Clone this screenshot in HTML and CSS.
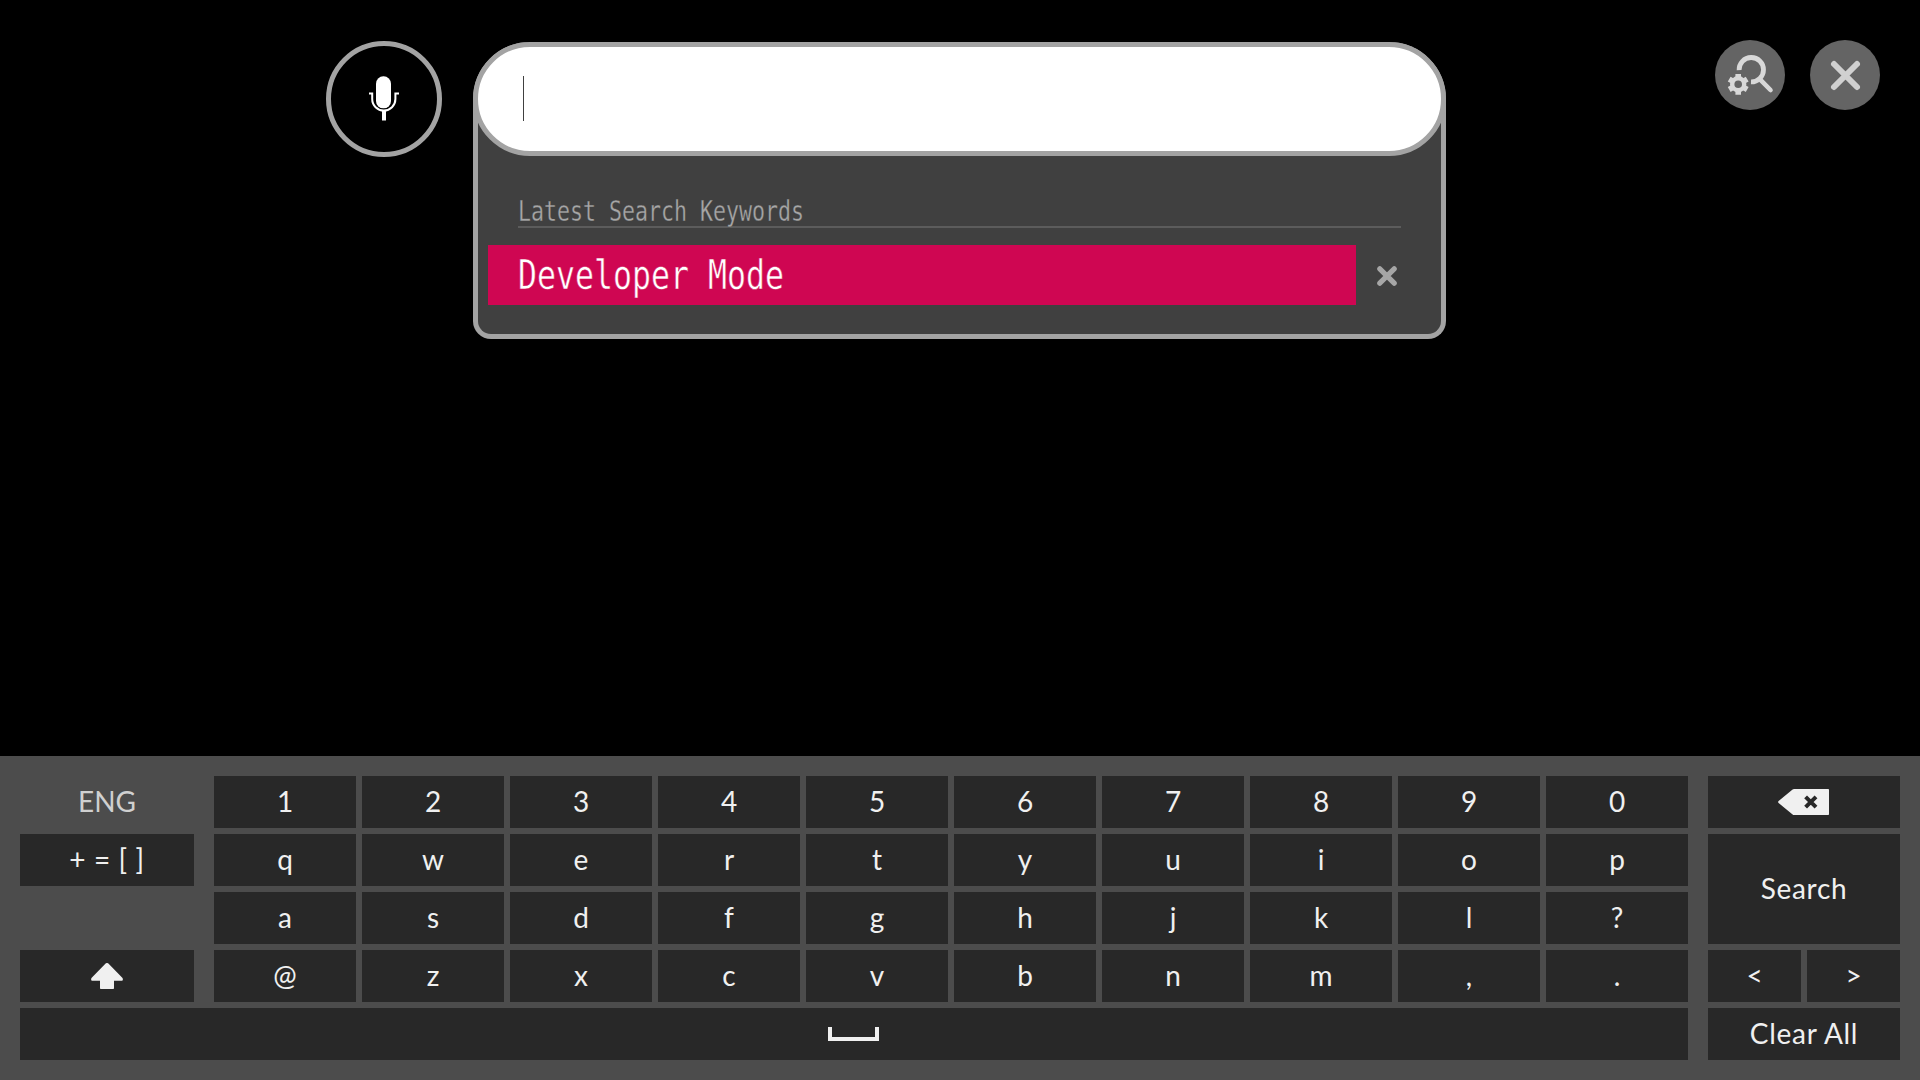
FILE: index.html
```html
<!DOCTYPE html>
<html lang="en">
<head>
<meta charset="utf-8">
<title>Search</title>
<link rel="stylesheet" href="styles.css">
</head>
<body>
<div class="screen">
  <header class="top">
    <button class="mic" aria-label="Voice search">
      <svg width="30" height="45" viewBox="0 0 30 45">
        <rect x="7" y="0.3" width="15" height="32" rx="7.4" fill="#fff"/>
        <path d="M0 17.6H3.2V23A11.5 11.5 0 0 0 26.4 23V17.6H30" fill="none" stroke="#fff" stroke-width="2"/>
        <path d="M13 35H17V44.5H13Z" fill="#fff"/>
      </svg>
    </button>
    <section class="panel">
      <div class="field"><span class="caret"></span></div>
      <div class="heading"><span class="label">Latest Search Keywords</span></div>
      <div class="result">
        <div class="keyword"><span class="term">Developer Mode</span></div>
        <svg class="remove" width="20" height="20" viewBox="0 0 20 20">
          <path d="M2.8 2.8L17.2 17.2M17.2 2.8L2.8 17.2" stroke="#a6a6a6" stroke-width="5.2" stroke-linecap="round"/>
        </svg>
      </div>
    </section>
    <nav class="actions">
      <svg width="70" height="70" viewBox="0 0 70 70">
        <circle cx="35" cy="35" r="35" fill="#646464"/>
        <g fill="none" stroke="#d8d8d8">
          <path d="M24.1 30.2A12.2 12.2 0 1 1 36 41.9" stroke-width="4.8"/>
          <path d="M45.5 39.8L55.5 50" stroke-width="4.6" stroke-linecap="round"/>
          <circle cx="23.2" cy="44.3" r="6" stroke-width="4.4"/>
          <path d="M23.2 33.9V38M23.2 50.6V54.7M14.2 39.1L17.8 41.2M28.6 47.4L32.2 49.5M14.2 49.5L17.8 47.4M28.6 41.2L32.2 39.1" stroke-width="5.6"/>
        </g>
      </svg>
      <svg width="70" height="70" viewBox="0 0 70 70">
        <circle cx="35" cy="35" r="35" fill="#646464"/>
        <path d="M24 24L47 47M47 24L24 47" stroke="#d0d0d0" stroke-width="6" stroke-linecap="round"/>
      </svg>
    </nav>
  </header>
  <main class="keyboard">
    <div class="lang">ENG</div>
    <div class="key c1">1</div><div class="key">2</div><div class="key">3</div><div class="key">4</div><div class="key">5</div><div class="key">6</div><div class="key">7</div><div class="key">8</div><div class="key">9</div><div class="key">0</div>
    <div class="key side icon">
      <svg width="52" height="26" viewBox="0 0 52 26">
        <path d="M16 0H50.2Q51 0 51 .8V25.2Q51 26 50.2 26H16Q15.3 26 14.6 25.4L.6 14Q-.4 13 .6 12L14.6 .6Q15.3 0 16 0Z" fill="#f0f0f0"/>
        <path d="M27.6 7.8L38 18.2M38 7.8L27.6 18.2" stroke="#282828" stroke-width="4"/>
      </svg>
    </div>
    <div class="key symbols">+ = [ ]</div>
    <div class="key c1">q</div><div class="key">w</div><div class="key">e</div><div class="key">r</div><div class="key">t</div><div class="key">y</div><div class="key">u</div><div class="key">i</div><div class="key">o</div><div class="key">p</div>
    <div class="key side tall word">Search</div>
    <div class="key c1">a</div><div class="key">s</div><div class="key">d</div><div class="key">f</div><div class="key">g</div><div class="key">h</div><div class="key">j</div><div class="key">k</div><div class="key">l</div><div class="key">?</div>
    <div class="key shift icon">
      <svg width="32" height="26" viewBox="0 0 32 26">
        <path d="M14.6 .6Q16 -.7 17.4 .6L31.3 14.8Q32.5 16.4 31.3 17.8H23V25.2Q23 26 22.2 26H9.8Q9 26 9 25.2V17.8H.7Q-.5 16.4 .7 14.8Z" fill="#f0f0f0"/>
      </svg>
    </div>
    <div class="key c1">@</div><div class="key">z</div><div class="key">x</div><div class="key">c</div><div class="key">v</div><div class="key">b</div><div class="key">n</div><div class="key">m</div><div class="key">,</div><div class="key">.</div>
    <div class="key prev">&lt;</div><div class="key">&gt;</div>
    <div class="key space icon">
      <svg width="51" height="14" viewBox="0 0 51 14">
        <path d="M2 0V12H49V0" fill="none" stroke="#f0f0f0" stroke-width="4"/>
      </svg>
    </div>
    <div class="key side word">Clear All</div>
  </main>
</div>
</body>
</html>
```
FILE: styles.css
```css
* { box-sizing: border-box; }

body {
  margin: 0;
  background: #000;
  font-family: Lato, sans-serif;
}

.screen {
  display: flex;
  flex-direction: column;
  justify-content: space-between;
  width: 1920px;
  height: 1080px;
  overflow: hidden;
}

.top {
  display: flex;
  align-items: flex-start;
  padding: 40px 40px 0 326px;
}

.mic {
  display: flex;
  align-items: center;
  justify-content: center;
  width: 116px;
  height: 116px;
  margin: 1px 31px 0 0;
  padding: 0 0 1px;
  border: 5px solid #a3a3a3;
  border-radius: 50%;
  background: #000;
}

.panel {
  width: 973px;
  height: 297px;
  margin-top: 2px;
  border: 5px solid #a3a3a3;
  border-top: 0;
  border-radius: 57px 57px 18px 18px;
  background: #404040;
}

.field {
  display: flex;
  align-items: center;
  height: 114px;
  margin: 0 -5px;
  padding: 0 0 1px 45px;
  border: 5px solid #a3a3a3;
  border-radius: 57px;
  background: #fff;
}

.caret {
  width: 1px;
  height: 45px;
  background: #404040;
}

.heading {
  display: flex;
  align-items: flex-end;
  width: 883px;
  height: 72px;
  margin-left: 40px;
  border-bottom: 2px solid #5c5c5c;
}

.label,
.term {
  font-family: "DejaVu Sans Mono", monospace;
  white-space: pre;
  transform-origin: 0 50%;
}

.label {
  margin-bottom: -3px;
  color: #a6a6a6;
  font-size: 28px;
  line-height: 34px;
  transform: scaleX(0.771);
  -webkit-text-stroke: 0.3px #404040;
}

.result {
  display: flex;
  align-items: center;
  gap: 21px;
  margin: 17px 0 0 10px;
}

.keyword {
  display: flex;
  align-items: center;
  width: 868px;
  height: 60px;
  padding-left: 30px;
  background: #cf0652;
}

.term {
  color: #fff;
  font-size: 40.5px;
  line-height: 60px;
  transform: scaleX(0.779);
  -webkit-text-stroke: 0.5px #cf0652;
}

.remove { margin-top: 2px; }

.actions {
  display: flex;
  gap: 25px;
  margin-left: auto;
}

.keyboard {
  display: grid;
  grid-template-columns: 174px 8px repeat(10, 142px) 8px 93px 93px;
  grid-template-rows: repeat(5, 52px);
  gap: 6px;
  height: 324px;
  padding: 20px;
  background: #4c4c4c;
  color: #f0f0f0;
  font-size: 28px;
}

.key,
.lang {
  display: flex;
  align-items: center;
  justify-content: center;
  padding-bottom: 2px;
}

.key { background: #282828; }
.icon { padding-bottom: 0; }
.lang { color: #d0d0d0; }
.c1 { grid-column: 3; }
.side { grid-column: 14 / span 2; }
.tall { grid-row: 2 / span 2; }
.symbols { grid-column: 1; letter-spacing: 0.6px; }
.shift { grid-area: 4 / 1; }
.prev { grid-column: 14; }
.space { grid-column: 1 / span 12; padding-right: 1px; }
.word { letter-spacing: 0.7px; }
```
